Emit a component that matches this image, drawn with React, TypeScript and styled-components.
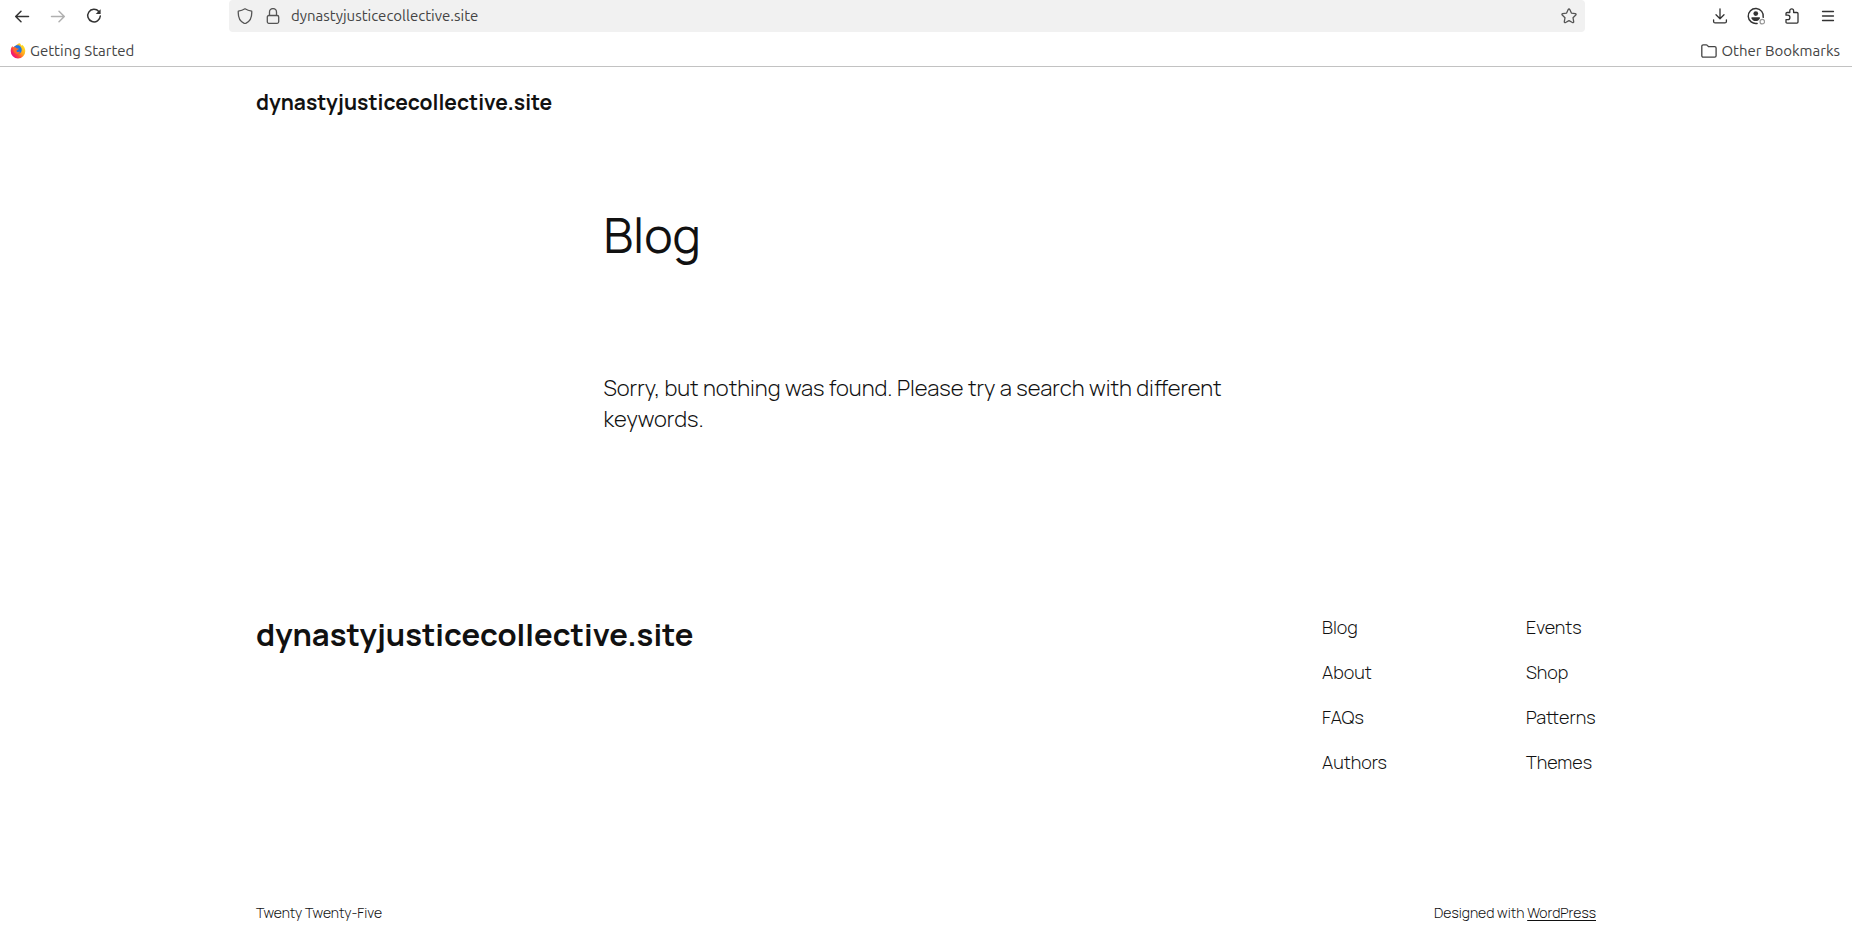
import React from "react";
import styled, { createGlobalStyle } from "styled-components";

const chromeFont = `"Ubuntu Sans", Ubuntu, "Noto Sans", "Open Sans", sans-serif`;
const siteFont = `Manrope, Inter, "Liberation Sans", sans-serif`;

const GlobalStyle = createGlobalStyle`
  *, *::before, *::after { box-sizing: border-box; }
  body { margin: 0; background: #fff; color: #111; font-family: ${siteFont}; }
  h1, h2, p, ul { margin: 0; padding: 0; }
  ul { list-style: none; }
`;

/* Browser chrome */
const BrowserBar = styled.div`
  border-bottom: 1px solid #c2c2c2;
  background: #fff;
  color: #3d3d3d;
  font-family: ${chromeFont};
`;

const Toolbar = styled.div`
  display: flex;
  align-items: center;
  height: 32px;
  padding: 0 6px 0 4px;
`;

const ToolButton = styled.button<{ $muted?: boolean }>`
  display: flex;
  align-items: center;
  justify-content: center;
  width: 36px;
  height: 32px;
  padding: 0;
  border: 0;
  background: none;
  color: ${(p) => (p.$muted ? "#b0b0b0" : "#333")};
`;

const AddressBar = styled.div`
  display: flex;
  align-items: center;
  flex: 1;
  height: 32px;
  margin: 0 117px;
  padding: 0 2px;
  border-radius: 4px;
  background: #f1f1f1;
`;

const AddressButton = styled(ToolButton)`
  width: 28px;
  color: #555;
`;

const AddressInput = styled.input`
  flex: 1;
  min-width: 0;
  padding: 0 4px;
  border: 0;
  outline: 0;
  background: transparent;
  color: #444;
  font-family: ${chromeFont};
  font-size: 15px;
  line-height: 20px;
`;

const BookmarksBar = styled.div`
  display: flex;
  align-items: center;
  justify-content: space-between;
  height: 34px;
  padding: 4px 12px 0 10px;
`;

const Bookmark = styled.button`
  display: flex;
  align-items: center;
  gap: 4px;
  padding: 0;
  border: 0;
  background: none;
  color: #444;
  font-family: ${chromeFont};
  font-size: 15px;
  line-height: 20px;
`;

/* Site */
const Wide = styled.div`
  width: 100%;
  max-width: 1340px;
  margin: 0 auto;
`;

const SiteHeader = styled.header`
  padding: 20px 48px;
`;

const TitleLink = styled.a<{ $large?: boolean }>`
  display: block;
  color: #111;
  font-size: ${(p) => (p.$large ? "31px" : "21px")};
  font-weight: 700;
  line-height: ${(p) => (p.$large ? "38px" : "30px")};
  text-decoration: none;
`;

const Content = styled.main`
  max-width: 645px;
  margin: 0 auto;
  padding: 71px 0 70px;
`;

const PageTitle = styled.h1`
  font-size: 48px;
  font-weight: 400;
  line-height: 54px;
`;

const Message = styled.p`
  margin-top: 111px;
  font-size: 22px;
  font-weight: 300;
  line-height: 31px;
`;

const SiteFooter = styled.footer`
  padding: 110px 48px 6px;
`;

const FooterTop = styled(Wide)`
  display: flex;
  justify-content: space-between;
  align-items: flex-start;
`;

const FooterNav = styled.nav`
  display: grid;
  grid-template-columns: 204px 70px;
`;

const LinkList = styled.ul`
  display: flex;
  flex-direction: column;
  gap: 20px;
`;

const FooterLink = styled.a`
  display: block;
  color: #111;
  font-size: 18px;
  font-weight: 300;
  line-height: 25px;
  text-decoration: none;
  white-space: nowrap;
`;

const Credits = styled(Wide)`
  display: flex;
  justify-content: space-between;
  margin-top: 128px;
  font-size: 14px;
  font-weight: 300;
  line-height: 20px;

  a {
    color: inherit;
    text-underline-offset: 2px;
  }
`;

const Icon = ({ children, size = 16 }: { children: React.ReactNode; size?: number }) => (
  <svg
    width={size}
    height={size}
    viewBox="0 0 16 16"
    fill="none"
    stroke="currentColor"
    strokeWidth="1.3"
    strokeLinecap="round"
    strokeLinejoin="round"
    aria-hidden="true"
  >
    {children}
  </svg>
);

const FirefoxLogo = () => (
  <svg width="16" height="16" viewBox="0 0 16 16" aria-hidden="true">
    <defs>
      <linearGradient id="flame" x1="0.9" y1="0.2" x2="0.15" y2="0.8">
        <stop offset="0" stopColor="#ffe226" />
        <stop offset="0.4" stopColor="#ffa51f" />
        <stop offset="0.7" stopColor="#ff4a36" />
        <stop offset="1" stopColor="#f0127a" />
      </linearGradient>
    </defs>
    <path d="M9.8.2c1 1 1.500 1.800 1.700 2.600.5-.2.6-.7.6-1.100 2 1.600 3.200 3.900 3.200 6.400A7.300 7.300 0 0 1 8 15.500 7.300 7.300 0 0 1 .7 8.100c0-2 .6-3.900 1.800-5.100l.4 1.500C3.700 3.500 4.600 3 5.600 3c1-1.500 2.500-2.500 4.200-2.800z" fill="url(#flame)" />
    <path d="M4.400 3.600C6 1.900 9 1.800 10.600 3.700c1.500 1.700 1.500 4.200.2 5.700-1.400 1.500-3.700 1.600-5 .4C4.300 8.400 3.600 5.600 4.400 3.600z" fill="#1f75e0" />
    <path d="M3.200 4.600c1.600-.6 3-.1 3.700 1h2c-.1.900-1 1.100-1.800 1.500-.6.3-.5.9-.4 1.300.9 1 2.300.6 3.400.2-.5 1.700-1.700 2.500-3.300 2.300C4.300 10.600 2.900 7.600 3.200 4.600z" fill="#ff6a2a" />
  </svg>
);

const columns = [
  ["Blog", "About", "FAQs", "Authors"],
  ["Events", "Shop", "Patterns", "Themes"],
];

export default function App() {
  return (
    <>
      <GlobalStyle />
      <BrowserBar>
        <Toolbar>
          <ToolButton aria-label="Back">
            <Icon><path d="M14.500 8.500H1.700M7 3.200 1.700 8.500 7 13.800" strokeWidth="1.500" /></Icon>
          </ToolButton>
          <ToolButton aria-label="Forward" $muted>
            <Icon><path d="M1.500 8.500h12.800M9 3.200l5.300 5.300L9 13.800" strokeWidth="1.500" /></Icon>
          </ToolButton>
          <ToolButton aria-label="Reload">
            <Icon>
              <path d="M12.800 3.500A6.300 6.300 0 1 0 14.300 8" strokeWidth="1.500" />
              <path d="M14.600 1.200v4.900H9.700z" fill="currentColor" stroke="none" />
            </Icon>
          </ToolButton>
          <AddressBar>
            <AddressButton aria-label="Tracking protection">
              <Icon><path d="M8 .8c2 1.300 4 2 6.700 2.300.4 5.600-1.500 10.100-5.500 12-.8.300-1.600.3-2.400 0C2.800 13.200.9 8.700 1.300 3.100 4 2.800 6 2.100 8 .8z" /></Icon>
            </AddressButton>
            <AddressButton aria-label="Site information">
              <Icon>
                <rect x="2.300" y="7.500" width="11.400" height="7.800" rx="1.500" />
                <path d="M4.500 7.300V4a3.500 3.500 0 0 1 7 0v3.300" />
              </Icon>
            </AddressButton>
            <AddressInput aria-label="Address" defaultValue="dynastyjusticecollective.site" />
            <AddressButton aria-label="Bookmark this page">
              <Icon><path d="M8 1c.4 0 .6.2.8.6l1.600 3.500 3.900.5c.8.1 1 .9.5 1.400L12 9.700l.7 3.900c.1.8-.6 1.300-1.300.9L8 12.600l-3.400 1.900c-.7.4-1.400-.1-1.300-.9L4 9.700 1.200 7c-.5-.5-.3-1.300.5-1.400l3.900-.5 1.600-3.500C7.400 1.200 7.600 1 8 1z" /></Icon>
            </AddressButton>
          </AddressBar>
          <ToolButton aria-label="Downloads">
            <Icon>
              <path d="M8 .8v9.700M4 6.800l4 3.900 4-3.900M1.600 11.800v1.600c0 .9.600 1.500 1.500 1.500h9.800c.9 0 1.500-.6 1.500-1.500v-1.600" />
            </Icon>
          </ToolButton>
          <ToolButton aria-label="Account">
            <Icon size={18}>
              <path d="M14.400 9.200A6.700 6.700 0 1 0 9 14.600" />
              <circle cx="7.800" cy="5.800" r="2.100" fill="currentColor" stroke="none" />
              <path d="M4 9h7.400v1.200c-.7 1.500-2 2.300-3.700 2.300s-3-.8-3.700-2.300z" fill="currentColor" stroke="none" />
              <circle cx="13.600" cy="13" r="2" stroke="#999" strokeWidth="1.100" />
            </Icon>
          </ToolButton>
          <ToolButton aria-label="Extensions">
            <Icon>
              <path d="M2 7.200V5.600c0-.7.400-1.100 1.100-1.100h2.700V2.700a1.900 1.900 0 0 1 3.800 0v1.800h3.300c.7 0 1.100.4 1.100 1.100v8.500c0 .7-.4 1.100-1.100 1.100H3.100c-.7 0-1.100-.4-1.100-1.100v-2.500h1.700a2.200 2.200 0 0 0 0-4.400z" />
            </Icon>
          </ToolButton>
          <ToolButton aria-label="Open application menu">
            <Icon><path d="M2.500 3.500h11M2.500 8h11M2.500 12.500h11" /></Icon>
          </ToolButton>
        </Toolbar>
        <BookmarksBar>
          <Bookmark><FirefoxLogo />Getting Started</Bookmark>
          <Bookmark>
            <Icon><path d="M.8 3.300c0-.8.6-1.400 1.400-1.400h3c.5 0 .8.1 1.100.5l1.300 1.300h6.100c.8 0 1.400.6 1.400 1.400v7.600c0 .8-.6 1.400-1.400 1.400H2.200c-.8 0-1.400-.6-1.400-1.400z" /></Icon>
            Other Bookmarks
          </Bookmark>
        </BookmarksBar>
      </BrowserBar>

      <SiteHeader>
        <Wide><TitleLink href="#">dynastyjusticecollective.site</TitleLink></Wide>
      </SiteHeader>

      <Content>
        <PageTitle>Blog</PageTitle>
        <Message>Sorry, but nothing was found. Please try a search with different keywords.</Message>
      </Content>

      <SiteFooter>
        <FooterTop>
          <h2><TitleLink href="#" $large>dynastyjusticecollective.site</TitleLink></h2>
          <FooterNav aria-label="Footer">
            {columns.map((links) => (
              <LinkList key={links[0]}>
                {links.map((label) => (
                  <li key={label}><FooterLink href="#">{label}</FooterLink></li>
                ))}
              </LinkList>
            ))}
          </FooterNav>
        </FooterTop>
        <Credits>
          <p>Twenty Twenty-Five</p>
          <p>Designed with <a href="#">WordPress</a></p>
        </Credits>
      </SiteFooter>
    </>
  );
}
